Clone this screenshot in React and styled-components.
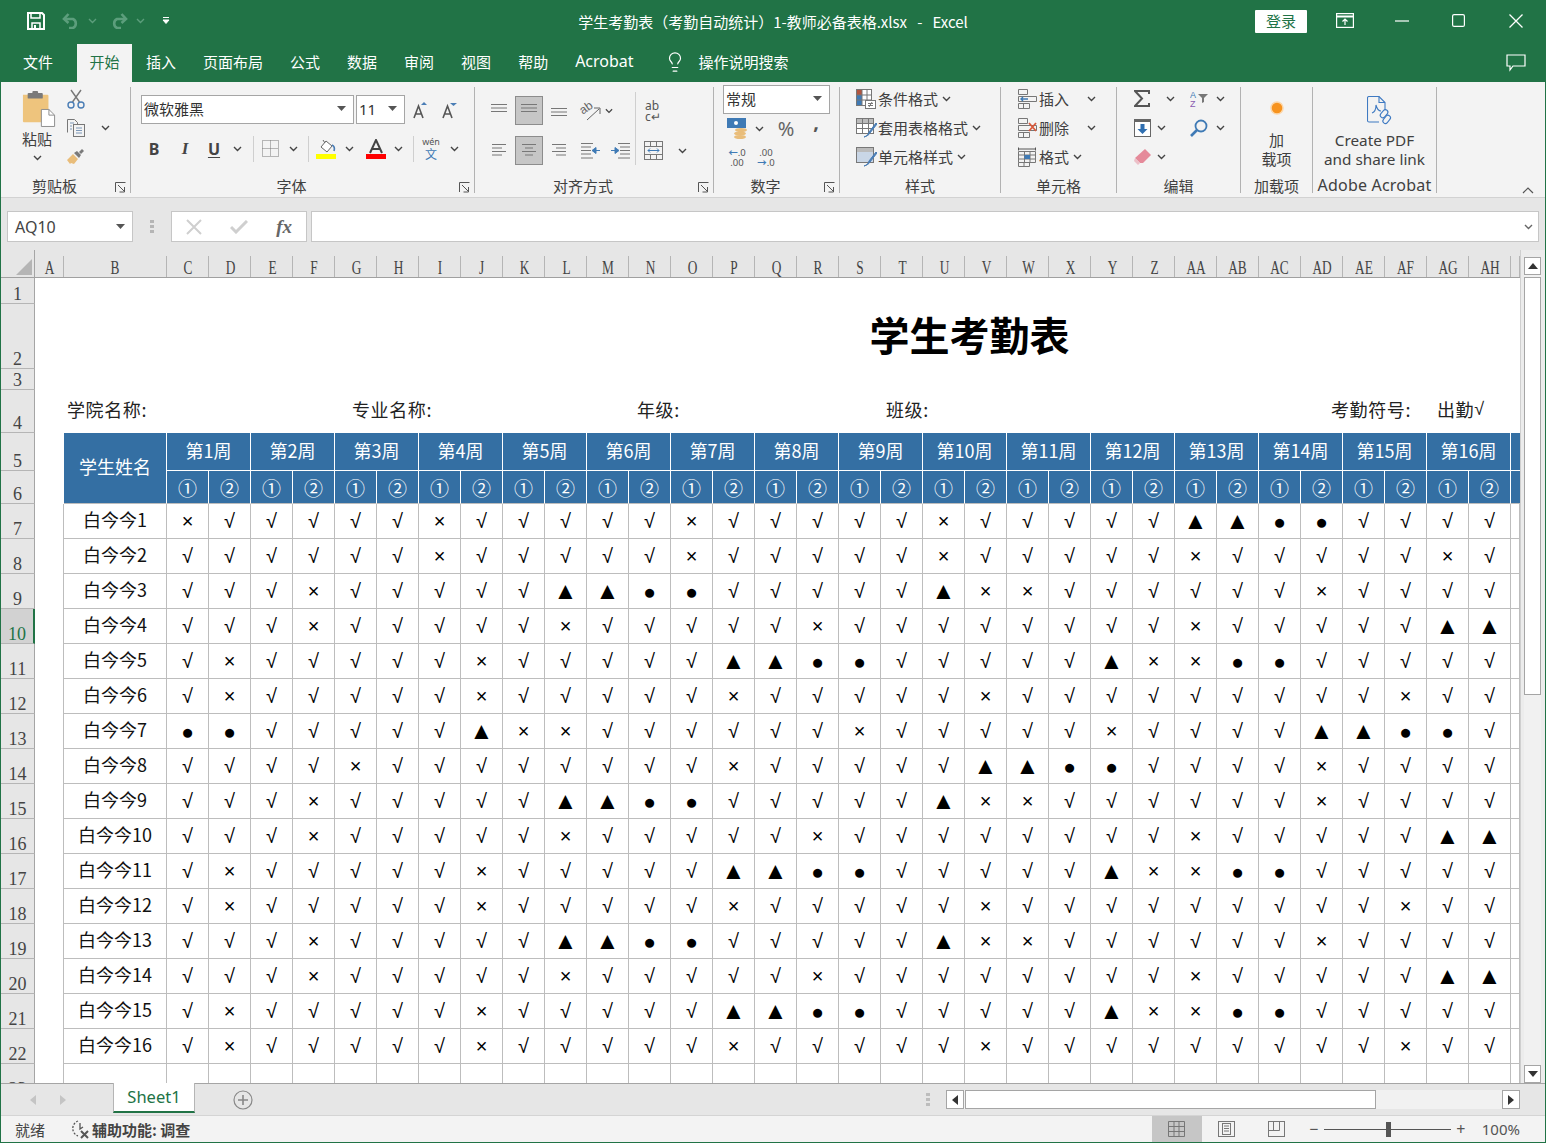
import styled, { createGlobalStyle } from 'styled-components'
import { Lightbulb } from 'lucide-react'

const CJK = `"Noto Sans CJK SC", "Noto Sans", sans-serif`
const LATIN = `"Noto Sans", "Noto Sans CJK SC", sans-serif`
const GREEN = '#217346'
const BLUE = '#346fa3'
const GRID = '#bdbdbd'

const GlobalStyle = createGlobalStyle`
    * { box-sizing : border-box; }
    html, body { margin : 0; padding : 0; background : #e6e6e6; }
    body { font-family : ${CJK}; color : #404040; }
`

const Window = styled.div`
    width : 1546px;
    height : 1143px;
    overflow : hidden;
    display : flex;
    flex-direction : column;
    border-left : 1px solid ${GREEN};
    border-right : 1px solid ${GREEN};
    border-bottom : 1px solid ${GREEN};
`

/* title bar */
const TitleBar = styled.div`
    height : 41px;
    flex : none;
    margin : 0 -1px;
    background : ${GREEN};
    display : grid;
    grid-template-columns : 1fr auto 1fr;
    align-items : center;
    color : #fff;
`
const QuickAccess = styled.div`
    display : flex;
    align-items : center;
    height : 100%;
    padding-left : 24px;
`
const DocTitle = styled.div`
    font-size : 15px;
    padding-top : 1px;
    white-space : pre;
    color : #fff;
`
const WindowControls = styled.div`
    display : flex;
    align-items : center;
    justify-content : flex-end;
    height : 100%;
    padding-right : 2px;
`
const LoginButton = styled.div`
    width : 52px;
    height : 23px;
    margin-top : 1px;
    margin-right : 9px;
    background : #fff;
    color : ${GREEN};
    font-size : 15px;
    line-height : 22px;
    text-align : center;
    border-radius : 1px;
`
const WinButton = styled.div`
    width : 57px;
    height : 100%;
    display : flex;
    align-items : center;
    justify-content : center;
`

/* ribbon tabs */
const TabBar = styled.div`
    height : 41px;
    flex : none;
    margin : 0 -1px;
    padding-left : 10px;
    padding-top : 3px;
    padding-right : 2px;
    background : ${GREEN};
    display : flex;
    gap : 1px;
`
const RibbonTab = styled.div`
    padding : 0 ${props => props.$active ? '12.5px' : '13px'};
    font-size : ${props => props.$latin ? 16 : 15}px;
    line-height : 35px;
    white-space : nowrap;
    color : ${props => props.$active ? GREEN : '#fff'};
    background : ${props => props.$active ? '#f3f3f3' : 'transparent'};
    margin-right : ${props => props.$file ? '10px' : '0'};
    font-family : ${props => props.$latin ? LATIN : CJK};
`
const SearchHint = styled.div`
    display : flex;
    align-items : center;
    gap : 13px;
    margin-left : 16px;
    font-size : 15px;
    color : #fff;
    height : 35px;
`
const CommentButton = styled.div`
    margin-left : auto;
    width : 57px;
    height : 38px;
    display : flex;
    align-items : center;
    justify-content : center;
`

/* ribbon */
const Ribbon = styled.div`
    height : 116px;
    flex : none;
    background : #f3f3f3;
    border-bottom : 1px solid #d2d2d2;
    display : flex;
`
const Group = styled.div`
    width : ${props => props.$w}px;
    flex : none;
    display : flex;
    flex-direction : column;
`
const GroupBody = styled.div`
    flex : 1;
    min-height : 0;
    display : flex;
    flex-direction : ${props => props.$col ? 'column' : 'row'};
    align-items : ${props => props.$center ? 'center' : 'stretch'};
    padding-top : ${props => props.$pt ?? 2}px;
    padding-left : ${props => props.$pl ?? 0}px;
`
const GroupFooter = styled.div`
    height : 23px;
    flex : none;
    display : flex;
    align-items : center;
    font-size : ${props => props.$latin ? 16 : 15}px;
    letter-spacing : ${props => props.$latin ? '0.2px' : '0'};
    line-height : 23px;
    white-space : nowrap;
    font-family : ${props => props.$latin ? LATIN : CJK};
`
const FooterLabel = styled.span`
    flex : 1;
    text-align : center;
`
const LauncherSlot = styled.div`
    width : 22px;
    flex : none;
    display : flex;
    justify-content : flex-end;
    padding-right : 4px;
    padding-top : 4px;
`
const GroupDivider = styled.div`
    width : 1px;
    flex : none;
    height : 106px;
    margin-top : 5px;
    background : #b2b2b2;
`
const ToolRow = styled.div`
    display : flex;
    align-items : center;
    height : ${props => props.$h ?? 29}px;
    margin-top : ${props => props.$mt ?? 0}px;
    flex : none;
`
const Tool = styled.div`
    width : ${props => props.$w}px;
    height : 100%;
    flex : none;
    margin-left : ${props => props.$ml ?? 0}px;
    display : flex;
    align-items : center;
    justify-content : center;
    font-size : ${props => props.$fs ?? 15}px;
`
const ActiveTool = styled(Tool)`
    margin : 0 2px;
    background : #c6c6c6;
    border : 1px solid #8c8c8c;
`
const ToolDivider = styled.div`
    width : 1px;
    height : 26px;
    flex : none;
    background : #cfcfcf;
    margin-left : ${props => props.$ml ?? 0}px;
    margin-right : ${props => props.$mr ?? 0}px;
`
const TallDivider = styled.div`
    width : 1px;
    height : 73px;
    flex : none;
    background : #cfcfcf;
`
const ComboBox = styled.div`
    width : ${props => props.$w}px;
    height : 29px;
    flex : none;
    margin-left : ${props => props.$ml ?? 0}px;
    background : #fff;
    border : 1px solid #a5a5a5;
    display : flex;
    align-items : center;
    justify-content : space-between;
    padding : 0 7px 2px ${props => props.$pl ?? 2}px;
    font-size : 15px;
    color : #333;
    font-family : ${props => props.$latin ? LATIN : CJK};
`
const ClipboardLeft = styled.div`
    width : 54px;
    margin-left : 9px;
    display : flex;
    flex-direction : column;
    align-items : center;
    padding-top : 7px;
    font-size : 15px;
    line-height : 20px;
`
const PasteLabel = styled.div`
    margin-top : 1px;
    margin-bottom : 5px;
    line-height : 22px;
`
const BigLabel = styled.div`
    font-size : ${props => props.$latin ? 15.3 : 15}px;
    line-height : 19px;
    text-align : center;
    white-space : nowrap;
    margin-top : ${props => props.$mt ?? 0}px;
    font-family : ${props => props.$latin ? LATIN : CJK};
`
const IconNudge = styled.span`
    display : flex;
    margin-left : ${props => props.$x}px;
`
const RibbonRest = styled.div`
    flex : 1;
    display : flex;
    justify-content : flex-end;
    align-items : flex-end;
    padding : 0 11px 3px 0;
`
const StyleLabel = styled.span`
    font-size : 15px;
    white-space : nowrap;
    margin-right : ${props => props.$mr ?? 4}px;
`
const RowsColumn = styled.div`
    display : flex;
    flex-direction : column;
`

/* formula bar */
const FormulaBand = styled.div`
    height : 52px;
    flex : none;
    background : #e6e6e6;
    display : flex;
    align-items : flex-start;
    padding-top : 13px;
    padding-left : 6px;
    padding-right : 6px;
`
const NameBox = styled.div`
    width : 126px;
    height : 31px;
    background : #fff;
    border : 1px solid #c6c6c6;
    display : flex;
    align-items : center;
    justify-content : space-between;
    padding : 0 7px;
    font-family : ${LATIN};
    font-size : 16px;
    color : #444;
`
const BarGrip = styled.div`
    width : 38px;
    height : 31px;
    display : flex;
    align-items : center;
    justify-content : center;
`
const FxBox = styled.div`
    width : 136px;
    height : 31px;
    background : #fff;
    border : 1px solid #c6c6c6;
    display : flex;
    align-items : center;
    justify-content : space-between;
    padding : 0 14px 0 14px;
`
const FxText = styled.span`
    font-family : "Liberation Serif", serif;
    font-style : italic;
    font-size : 19px;
    font-weight : 700;
    color : #666;
`
const FormulaInput = styled.div`
    flex : 1;
    height : 31px;
    margin-left : 4px;
    background : #fff;
    border : 1px solid #c6c6c6;
    display : flex;
    align-items : center;
    justify-content : flex-end;
    padding-right : 5px;
`

/* sheet */
const SheetArea = styled.div`
    flex : 1;
    min-height : 0;
    display : flex;
    overflow : hidden;
`
const SheetGrid = styled.div`
    width : 1519px;
    flex : none;
    display : grid;
    grid-template-columns : 34px 29px 103px repeat(32, 42px) 9px;
    grid-template-rows : 28px 26px 65px 21px 43px 38px 33px repeat(17, 35px);
    background : #fff;
    overflow : hidden;
    font-family : ${CJK};
    color : #111;
`
const Corner = styled.div`
    background : #e6e6e6;
    border-right : 1px solid #a5a5a5;
    border-bottom : 1px solid #a0a0a0;
    display : flex;
    align-items : flex-end;
    justify-content : flex-end;
    padding : 0 2px 2px 0;
`
const ColHead = styled.div`
    background : linear-gradient(#b5b5b5, #b5b5b5) no-repeat right bottom / 1px 21px #e6e6e6;
    border-bottom : 1px solid #a0a0a0;
    display : flex;
    align-items : flex-end;
    justify-content : center;
    overflow : hidden;
`
const ColLetter = styled.span`
    display : block;
    font-family : "Liberation Serif", serif;
    font-size : 18px;
    line-height : 18px;
    color : #444;
    transform : scaleX(0.74);
    white-space : nowrap;
`
const RowHead = styled.div`
    grid-column : 1;
    background : ${props => props.$selected ? '#d2d2d2' : '#e6e6e6'};
    border-right : ${props => props.$selected ? `2px solid ${GREEN}` : '1px solid #a5a5a5'};
    border-bottom : 1px solid #b5b5b5;
    display : flex;
    align-items : flex-end;
    justify-content : center;
    font-family : "Liberation Serif", serif;
    font-size : 18px;
    line-height : 18px;
    overflow : hidden;
    color : ${props => props.$selected ? GREEN : '#444'};
`
const Blank = styled.div`
    grid-column : span ${props => props.$span ?? 1};
    border-right : ${props => props.$lined ? `1px solid ${GRID}` : 'none'};
`
const SheetTitle = styled.div`
    grid-column : span 27;
    display : flex;
    align-items : center;
    justify-content : center;
    font-size : 40px;
    line-height : 48px;
    padding-bottom : 6px;
    font-weight : 700;
    color : #000;
`
const InfoLabel = styled.div`
    grid-column : ${props => props.$col} / span ${props => props.$span};
    padding-left : ${props => props.$pl}px;
    padding-bottom : 5px;
    display : flex;
    align-items : center;
    font-size : 18px;
    letter-spacing : 0.6px;
    white-space : nowrap;
    color : #222;
`
const CheckGlyph = styled.span`
    font-family : "Liberation Sans", sans-serif;
    font-size : 18px;
`
const HeadName = styled.div`
    grid-row : span 2;
    background : ${BLUE};
    color : #fff;
    border-right : 1px solid #fff;
    border-bottom : 1px solid ${GRID};
    display : flex;
    align-items : center;
    justify-content : center;
    font-size : 18px;
    padding-bottom : 4px;
`
const WeekCell = styled.div`
    grid-column : span ${props => props.$span ?? 2};
    background : ${BLUE};
    color : #fff;
    border-right : ${props => props.$tail ? 'none' : '1px solid #fff'};
    border-bottom : 1px solid #fff;
    display : flex;
    align-items : center;
    justify-content : center;
    font-size : 18px;
    padding-bottom : 4px;
`
const TurnCell = styled.div`
    background : ${BLUE};
    color : #fff;
    border-right : ${props => props.$tail ? 'none' : '1px solid #fff'};
    border-bottom : 1px solid ${GRID};
    display : flex;
    align-items : center;
    justify-content : center;
    font-size : 19px;
    padding-top : 1px;
`
const NameCell = styled.div`
    border-right : 1px solid ${GRID};
    border-bottom : 1px solid ${GRID};
    display : flex;
    align-items : center;
    justify-content : center;
    font-size : 18px;
    padding-bottom : 4px;
    white-space : nowrap;
    color : #111;
`
const MarkCell = styled.div`
    border-right : 1px solid ${GRID};
    border-bottom : 1px solid ${GRID};
    display : flex;
    align-items : center;
    justify-content : center;
    font-family : "Liberation Sans", sans-serif;
    font-size : ${props => props.$fs}px;
    line-height : 1;
    color : #000;
`

/* right gutter with the vertical scroll bar */
const Gutter = styled.div`
    flex : 1;
    background : #ececec;
    border-left : 1px solid #cfcfcf;
    padding : 7px 4px 0 3px;
    display : flex;
    flex-direction : column;
`
const ScrollButton = styled.div`
    height : 18px;
    flex : none;
    background : #fff;
    border : 1px solid #a5a5a5;
    display : flex;
    align-items : center;
    justify-content : center;
`
const VerticalTrack = styled.div`
    flex : 1;
    padding-top : 2px;
    background : #f1f1f1;
`
const VerticalThumb = styled.div`
    height : 418px;
    background : #fff;
    border : 1px solid #a5a5a5;
`

/* sheet tabs */
const TabStrip = styled.div`
    height : 32px;
    flex : none;
    background : #e6e6e6;
    border-top : 1px solid #a5a5a5;
    display : flex;
    align-items : flex-start;
`
const TabArrows = styled.div`
    width : 112px;
    height : 31px;
    display : flex;
    align-items : center;
    gap : 24px;
    padding-left : 29px;
`
const SheetTab = styled.div`
    width : 82px;
    height : 30px;
    margin-top : -1px;
    background : #fff;
    border-left : 1px solid #b5b5b5;
    border-right : 1px solid #b5b5b5;
    border-bottom : 2px solid ${GREEN};
    color : ${GREEN};
    font-family : ${LATIN};
    font-size : 16.5px;
    line-height : 27px;
    text-align : center;
`
const AddSheet = styled.div`
    width : 96px;
    height : 31px;
    display : flex;
    align-items : center;
    padding-left : 38px;
`
const SplitGrip = styled.div`
    margin-left : auto;
    width : 36px;
    height : 31px;
    display : flex;
    align-items : center;
    justify-content : center;
`
const HorizontalBar = styled.div`
    width : 574px;
    height : 19px;
    margin-top : 6px;
    margin-right : 25px;
    display : flex;
    background : #f1f1f1;
`
const HScrollButton = styled.div`
    width : 18px;
    flex : none;
    background : #fff;
    border : 1px solid #a5a5a5;
    display : flex;
    align-items : center;
    justify-content : center;
`
const HorizontalThumb = styled.div`
    width : 411px;
    margin-left : 1px;
    background : #fff;
    border : 1px solid #a5a5a5;
`
const HorizontalFill = styled.div`
    flex : 1;
`

/* status bar */
const StatusBar = styled.div`
    height : 27px;
    flex : none;
    background : #f3f3f3;
    border-top : 1px solid #d4d4d4;
    display : flex;
    align-items : center;
    font-size : 15px;
    color : #444;
`
const StatusText = styled.span`
    margin-left : 14px;
    width : 38px;
`
const AccessText = styled.span`
    display : flex;
    align-items : center;
    gap : 3px;
    font-weight : 700;
    font-size : 15px;
    color : #444;
`
const ViewSwitch = styled.div`
    margin-left : auto;
    display : flex;
    align-items : center;
    height : 100%;
`
const ViewButton = styled.div`
    width : 50px;
    height : 100%;
    display : flex;
    align-items : center;
    justify-content : center;
    background : ${props => props.$active ? '#c6c6c6' : 'transparent'};
`
const ZoomArea = styled.div`
    display : flex;
    align-items : center;
    margin-left : 2px;
    font-size : 15px;
    color : #555;
`
const ZoomSign = styled.span`
    font-family : ${LATIN};
    font-size : 16px;
    width : 20px;
    text-align : center;
    line-height : 1;
`
const ZoomSlider = styled.div`
    width : 127px;
    height : 1px;
    background : #555;
    display : flex;
    align-items : center;
    padding-left : 62px;
`
const ZoomThumb = styled.div`
    width : 5px;
    height : 15px;
    background : #555;
    flex : none;
`
const ZoomValue = styled.span`
    margin-left : 11px;
    margin-right : 25px;
    font-family : ${LATIN};
    font-size : 15px;
`

/* icons */
const Chev = ({ color = '#444' }) => (
    <svg width="9" height="6" viewBox="0 0 9 6"><path d="M1 1l3.5 3.5L8 1" fill="none" stroke={color} strokeWidth="1.4" /></svg>
)
const Caret = ({ color = '#555' }) => (
    <svg width="9" height="5" viewBox="0 0 9 5"><path d="M0 0h9L4.5 5z" fill={color} /></svg>
)
const Launcher = () => (
    <svg width="11" height="11" viewBox="0 0 11 11" fill="none" stroke="#555" strokeWidth="1">
        <path d="M.5 10V.5h10" /><path d="M3 3l6 6M9.500 5v5h-5" />
    </svg>
)
const SaveIcon = () => (
    <svg width="18" height="18" viewBox="0 0 18 18" fill="none" stroke="#fff" strokeWidth="2">
        <path d="M1 1h14l2 2v14H1z" /><path d="M4 1v5h9V1" strokeWidth="1.5" /><path d="M5 17v-6h8v6" strokeWidth="1.5" /><path d="M8 13v4" />
    </svg>
)
const UndoIcon = ({ flip }) => (
    <svg width="18" height="16" viewBox="0 0 18 16" fill="none" stroke="#5c9e7c" strokeWidth="2.6" style={flip ? { transform: 'scaleX(-1)' } : undefined}>
        <path d="M2 6h9a5 5 0 0 1 0 9H7" /><path d="M6.500 1L2 6l4.500 4" />
    </svg>
)
const CustomizeIcon = () => (
    <svg width="8" height="8" viewBox="0 0 8 8"><path d="M1 .5h6M1 3h6l-3 3.500z" stroke="#fff" fill="#fff" strokeWidth="1" /></svg>
)
const DisplayIcon = () => (
    <svg width="18" height="15" viewBox="0 0 18 15" fill="none" stroke="#fff" strokeWidth="1.2">
        <rect x=".6" y=".6" width="16.8" height="13.8" /><path d="M.6 3.500h16.800" strokeWidth="2" /><path d="M9 12V6M6.500 8.500L9 6l2.500 2.500" />
    </svg>
)
const MinIcon = () => <svg width="14" height="2" viewBox="0 0 14 2"><path d="M0 1h14" stroke="#fff" strokeWidth="1.2" /></svg>
const MaxIcon = () => <svg width="13" height="13" viewBox="0 0 13 13"><rect x=".6" y=".6" width="11.8" height="11.8" rx="1.5" fill="none" stroke="#fff" strokeWidth="1.2" /></svg>
const CloseIcon = () => <svg width="14" height="14" viewBox="0 0 14 14"><path d="M.5.500l13 13M13.500.5l-13 13" stroke="#fff" strokeWidth="1.3" /></svg>
const CommentIcon = () => (
    <svg width="20" height="18" viewBox="0 0 20 18" fill="none" stroke="#fff" strokeWidth="1.2"><path d="M1 1h18v11H7l-3 4v-4H1z" /></svg>
)
const PasteIcon = () => (
    <svg width="34" height="36" viewBox="0 0 36 38">
        <path d="M1 4h26a1 1 0 0 1 1 1v28H2a1 1 0 0 1-1-1z" fill="#eec47d" />
        <rect x="6" y="2" width="16" height="6" rx="1" fill="#7a7a7a" />
        <rect x="11" y="0" width="6" height="4" rx="1" fill="#7a7a7a" />
        <path d="M20.500 19.500h8l6 6v12h-14z" fill="#fff" stroke="#8a8a8a" />
        <path d="M28.500 19.500v6h6" fill="none" stroke="#8a8a8a" />
    </svg>
)
const CutIcon = () => (
    <svg width="18" height="20" viewBox="0 0 18 20" fill="none">
        <path d="M4 1l8.500 12M14 1L5.500 13" stroke="#777" strokeWidth="1.4" />
        <circle cx="4" cy="16" r="3" stroke="#4a7db5" strokeWidth="1.4" /><circle cx="14" cy="16" r="3" stroke="#4a7db5" strokeWidth="1.4" />
    </svg>
)
const CopyIcon = () => (
    <svg width="18" height="18" viewBox="0 0 18 18" fill="none" stroke="#777">
        <path d="M.5 13.500V.5h7l3 3v2" /><rect x="6.500" y="5.500" width="11" height="12" fill="#f3f3f3" />
        <path d="M3 4h4M3 7h2M3 10h2M9 9h6M9 11.500h6M9 14h6" stroke="#7d98b8" />
    </svg>
)
const PainterIcon = () => (
    <svg width="18" height="16" viewBox="0 0 18 16">
        <path d="M0 11l6-6 5 5-4 5-3-1-1 1z" fill="#e9bd7a" /><path d="M7 4l3-2 4 4-2 3z" fill="#7a7a7a" /><path d="M12 3l3-3 2 2-3 3z" fill="#7a7a7a" />
    </svg>
)
const GrowFont = ({ down }) => (
    <svg width="16" height="18" viewBox="0 0 16 18">
        <path d="M1 17L5.500 5 10 17M3 13h5" fill="none" stroke="#555" strokeWidth="1.6" />
        <path d={down ? 'M8 2h7l-3.500 3z' : 'M8 4h6l-3-3z'} fill="#4a7db5" />
    </svg>
)
const BoldMark = styled.span`
    font-family : ${LATIN};
    font-weight : 700;
    font-size : 16px;
    color : #444;
`
const ItalicMark = styled(BoldMark)`
    font-style : italic;
    font-family : "Liberation Serif", serif;
    font-size : 17px;
`
const UnderMark = styled(BoldMark)`
    text-decoration : underline;
    text-underline-offset : 2px;
`
const BorderIcon = () => (
    <svg width="17" height="17" viewBox="0 0 17 17" fill="none" stroke="#777" strokeDasharray="1 1"><path d="M.5.500h16v16H.5zM8.500.5v16M.5 8.500h16" /></svg>
)
const FillIcon = () => (
    <svg width="21" height="20" viewBox="0 0 21 20">
        <path d="M5 8l5-6 6 5-5 6z" fill="#fff" stroke="#666" /><path d="M7 1l2 3" stroke="#666" />
        <path d="M16 6c2 1 3 3 2 6" fill="none" stroke="#4a7db5" strokeWidth="1.6" />
        <rect x="0" y="15" width="20" height="5" fill="#ffff00" />
    </svg>
)
const FontColorIcon = () => (
    <svg width="20" height="20" viewBox="0 0 20 20">
        <path d="M4 14L10 1l6 13M6 10h8" fill="none" stroke="#444" strokeWidth="2" /><rect y="15" width="20" height="5" fill="#ff0000" />
    </svg>
)
const PhoneticText = styled.span`
    display : flex;
    flex-direction : column;
    align-items : center;
`
const PhoneticTop = styled.span`
    font-family : ${LATIN};
    font-size : 9px;
    line-height : 10px;
    color : #555;
`
const PhoneticBottom = styled.span`
    font-size : 12px;
    line-height : 13px;
    color : #3f7ab5;
`
const LinesIcon = ({ lines, y = 0, h = 14 }) => (
    <svg width="18" height={h} viewBox={`0 0 18 ${h}`} fill="none" stroke="#777" strokeWidth="1">
        {lines.map((l, i) => <path key={i} d={`M${l[0]} ${y + i * 3.5 + 0.5}H${l[1]}`} />)}
    </svg>
)
const OrientIcon = () => (
    <svg width="24" height="24" viewBox="0 0 24 24">
        <g transform="rotate(-35 10 11)"><text x="3" y="12" fontFamily="Liberation Sans" fontSize="12" fill="#666">ab</text></g>
        <path d="M9 21L21 10M16 9h6v6" fill="none" stroke="#666" />
    </svg>
)
const WrapIcon = styled.span`
    font-family : ${LATIN};
    font-size : 12px;
    line-height : 11px;
    color : #555;
    text-align : left;
    white-space : pre;
`
const IndentIcon = ({ flip }) => (
    <svg width="19" height="16" viewBox="0 0 19 16" style={flip ? { transform: 'scaleX(-1)' } : undefined}>
        <path d="M7 .5h12M9 4h10M9 7.500h10M9 11h10M7 15h12" stroke="#777" fill="none" />
        <path d="M0 7.500h4v-3l4 3-4 3v-3z" stroke="#3f7ab5" fill="#3f7ab5" />
    </svg>
)
const MergeIcon = () => (
    <svg width="19" height="19" viewBox="0 0 19 19" fill="none" stroke="#777">
        <rect x=".5" y=".5" width="18" height="18" /><path d="M.5 5.500h18M.5 13.500h18M6.500.5v5M12.500.5v5M6.500 13.500v5M12.500 13.500v5" />
        <path d="M4 9.500h11M6 7.500L4 9.500l2 2M13 7.500l2 2-2 2" stroke="#3f7ab5" />
    </svg>
)
const MoneyIcon = () => (
    <svg width="20" height="21" viewBox="0 0 20 21">
        <rect x="0" y="0" width="19" height="10" fill="#3f7ab5" /><circle cx="9" cy="5" r="2" fill="#fff" />
        <ellipse cx="14" cy="12" rx="6" ry="2" fill="#e9bd7a" /><ellipse cx="13" cy="15.500" rx="6" ry="2" fill="#e9bd7a" /><ellipse cx="13" cy="19" rx="6" ry="2" fill="#e9bd7a" />
    </svg>
)
const PercentText = styled.span`
    font-family : ${LATIN};
    font-size : 20px;
    color : #666;
`
const CommaText = styled.span`
    font-family : ${LATIN};
    font-weight : 700;
    font-size : 20px;
    line-height : 20px;
    padding-bottom : 14px;
    color : #555;
`
const DecimalWrap = styled.span`
    display : flex;
    flex-direction : column;
    align-items : center;
    font-family : ${LATIN};
    font-size : 9.5px;
    line-height : 10px;
    color : #555;
    white-space : pre;
`
const DecimalArrow = styled.span`
    color : #3f7ab5;
    font-weight : 700;
`
const CondFormatIcon = () => (
    <svg width="20" height="20" viewBox="0 0 20 20" fill="none" stroke="#777">
        <rect x=".5" y=".5" width="15" height="16" fill="#fff" /><rect x="1" y="1" width="5" height="5" fill="#b2553f" stroke="none" /><rect x="1" y="6" width="5" height="5" fill="#3f7ab5" stroke="none" /><rect x="1" y="11" width="5" height="5" fill="#3f7ab5" stroke="none" />
        <path d="M6 .5v16M.5 6h15M.5 11h15M11 .5v16" /><rect x="9.500" y="11.500" width="10" height="8" fill="#fff" />
        <path d="M12 14.500h5M12 16.500h5M16 13l-3 5" />
    </svg>
)
const TableBrushIcon = ({ fill }) => (
    <svg width="21" height="20" viewBox="0 0 21 20" fill="none" stroke="#777">
        <rect x=".5" y=".5" width="17" height="15" fill="#fff" /><rect x="1" y="1" width="16" height="4" fill="#bbb" stroke="none" />
        {fill ? <rect x="1" y="5" width="16" height="10" fill="#c9d6e6" stroke="none" /> : <path d="M.5 5.500h17M.5 10.500h17M6.500.5v15M12.500.5v15" />}
        <path d="M8 19c3-1 4-2 5-5l7-9 1 1-7 9c-1 2-3 3-6 4z" fill="#4a7db5" stroke="#4a7db5" />
    </svg>
)
const CellIcon = ({ kind }) => (
    <svg width="19" height="20" viewBox="0 0 19 20" fill="none" stroke="#777">
        {kind !== 'format' && <path d="M.5.500h9v5h-9zM.5 14.500h11v5H.5zM5.500 14.500v5M.5 7.500h18v5H.5z" />}
        {kind === 'insert' && <path d="M10 10H3M5 8L3 10l2 2" stroke="#3f7ab5" strokeWidth="1.4" />}
        {kind === 'delete' && <path d="M11 5l7 8M18 5l-7 8" stroke="#d9593b" strokeWidth="1.8" />}
        {kind === 'format' && (
            <>
                <path d="M.5 4.500h17v11H.5zM6.500 4.500v11M12 4.500v11M.5 8h17M.5 12h17M.5 15.500v4h11v-4M6 15.500v4" />
                <path d="M.5.500v3M17.500.5v3M1 2h16" stroke="#555" />
                <rect x="6.500" y="8" width="5.500" height="4" fill="#3f7ab5" stroke="none" />
            </>
        )}
    </svg>
)
const SumIcon = () => (
    <svg width="16" height="17" viewBox="0 0 16 17"><path d="M15 4V1H1l7 7.500L1 16h14v-3" fill="none" stroke="#555" strokeWidth="2" /></svg>
)
const SortIcon = () => (
    <svg width="19" height="18" viewBox="0 0 19 18" fill="none">
        <text x="0" y="8" fontFamily="Liberation Sans" fontSize="9" fill="#3f7ab5">A</text>
        <text x="0" y="17" fontFamily="Liberation Sans" fontSize="9" fill="#8a5ab0">Z</text>
        <path d="M8 4h10l-4 4v4l-2 1V8z" fill="#777" />
    </svg>
)
const FillDownIcon = () => (
    <svg width="17" height="18" viewBox="0 0 17 18">
        <rect x=".5" y=".5" width="16" height="17" fill="#fff" stroke="#666" /><rect width="17" height="3" fill="#666" />
        <path d="M6.500 5h4v5h3L8.500 15 3.500 10h3z" fill="#2f6fb1" />
    </svg>
)
const FindIcon = () => (
    <svg width="18" height="18" viewBox="0 0 18 18" fill="none" stroke="#3f7ab5">
        <circle cx="11" cy="7" r="5.500" strokeWidth="1.8" /><path d="M7 11l-6 6" strokeWidth="2.6" />
    </svg>
)
const EraserIcon = () => (
    <svg width="17" height="16" viewBox="0 0 17 16">
        <path d="M11 0l6 6-8 8H6L1 9z" fill="#e58a9a" /><path d="M1 9l5 5-2 2-4-4z" fill="#ecc0c8" />
    </svg>
)
const AddinDot = () => (
    <svg width="16" height="16" viewBox="0 0 16 16"><circle cx="8" cy="8" r="6" fill="#f7931e" stroke="#fcd6a8" strokeWidth="1.500" /></svg>
)
const PdfIcon = () => (
    <svg width="26" height="30" viewBox="0 0 26 30" fill="none" stroke="#3f7ac2" strokeWidth="1.1">
        <path d="M12 26H2a1.500 1.500 0 0 1-1.500-1.500V2A1.500 1.500 0 0 1 2 .5h10l6 6v8" /><path d="M12 .5v6h6" />
        <path d="M5 17c3-1 4-4 4-8 1 4 3 6 5 6" />
        <rect x="15" y="13" width="5" height="9" rx="2.500" transform="rotate(40 17 17)" /><rect x="17.500" y="19" width="5" height="9" rx="2.500" transform="rotate(40 20 23)" />
    </svg>
)
const CrossGray = () => <svg width="16" height="16" viewBox="0 0 16 16"><path d="M1 1l14 14M15 1L1 15" stroke="#cfcfcf" strokeWidth="2" /></svg>
const CheckGray = () => <svg width="18" height="14" viewBox="0 0 18 14"><path d="M1 7l5 5L17 1" fill="none" stroke="#cfcfcf" strokeWidth="3" /></svg>
const GripDots = ({ color = '#b5b5b5' }) => (
    <svg width="4" height="14" viewBox="0 0 4 14" fill={color}><rect width="4" height="3" /><rect y="5" width="4" height="3" /><rect y="10" width="4" height="3" /></svg>
)
const SelectAll = () => <svg width="16" height="16" viewBox="0 0 16 16"><path d="M16 0v16H0z" fill="#b5b5b5" /></svg>
const Tri = ({ dir, color = '#333' }) => {
    const d = { up: 'M0 6L5 0l5 6z', down: 'M0 0h10L5 6z', left: 'M6 0v10L0 5z', right: 'M0 0v10l6-5z' }[dir]
    const wide = dir === 'up' || dir === 'down'
    return <svg width={wide ? 10 : 6} height={wide ? 6 : 10} viewBox={wide ? '0 0 10 6' : '0 0 6 10'}><path d={d} fill={color} /></svg>
}
const PlusCircle = () => (
    <svg width="20" height="20" viewBox="0 0 20 20" fill="none" stroke="#888" strokeWidth="1.200"><circle cx="10" cy="10" r="9" /><path d="M5 10h10M10 5v10" strokeWidth="1.600" /></svg>
)
const AccessIcon = () => (
    <svg width="20" height="20" viewBox="0 0 20 20" fill="none" stroke="#555" strokeWidth="1.300">
        <path d="M8 2a8 8 0 0 0 0 15" strokeDasharray="2 1.500" /><path d="M10 4v6l3-2" /><path d="M11 12l7 7M18 12l-7 7" strokeWidth="2" />
    </svg>
)
const NormalViewIcon = () => (
    <svg width="17" height="16" viewBox="0 0 17 16" fill="none" stroke="#777"><path d="M.5.500h16v15H.5zM.5 5.500h16M.5 10.500h16M6 .5v15M11 .5v15" /></svg>
)
const PageViewIcon = () => (
    <svg width="17" height="16" viewBox="0 0 17 16" fill="none" stroke="#777"><rect x=".5" y=".5" width="16" height="15" /><rect x="4.500" y="2.500" width="8" height="11" /><path d="M6 5h5M6 7.500h5M6 10h5" /></svg>
)
const BreakViewIcon = () => (
    <svg width="17" height="16" viewBox="0 0 17 16" fill="none" stroke="#777"><rect x=".5" y=".5" width="16" height="15" /><path d="M5.500.5v9M11.500.5v9M.5 9.500h11" /></svg>
)
const Collapse = () => <svg width="12" height="7" viewBox="0 0 12 7"><path d="M1 6l5-5 5 5" fill="none" stroke="#555" strokeWidth="1.200" /></svg>

/* sheet data */
const letters = ['A', 'B', 'C', 'D', 'E', 'F', 'G', 'H', 'I', 'J', 'K', 'L', 'M', 'N', 'O', 'P', 'Q', 'R', 'S', 'T', 'U', 'V', 'W', 'X', 'Y', 'Z', 'AA', 'AB', 'AC', 'AD', 'AE', 'AF', 'AG', 'AH', '']
const r9 = 'vvvxvvvvvttoovvvvvtxxvvvvvvxvvvv'
const r10 = 'vvvxvvvvvxvvvvvxvvvvvvvvxvvvvvtt'
const r11 = 'vxvvvvvxvvvvvttoovvvvvtxxoovvvvv'
const r12 = 'vxvvvvvxvvvvvxvvvvvxvvvvvvvvvxvv'
const students = [
    'xvvvvvxvvvvvxvvvvvxvvvvvttoovvvv',
    'vvvvvvxvvvvvxvvvvvxvvvvvxvvvvvxv',
    r9, r10, r11, r12,
    'oovvvvvtxxvvvvvvxvvvvvxvvvvttoov',
    'vvvvxvvvvvvvvxvvvvvttoovvvvxvvvv',
    r9, r10, r11, r12, r9, r10, r11, r12,
]
const MARKS = {
    v: { glyph: '√', size: 20 },
    x: { glyph: '×', size: 20 },
    t: { glyph: '▲', size: 24 },
    o: { glyph: '●', size: 21 },
}
const weeks = Array.from({ length: 16 }, (_, i) => `第${i + 1}周`)
const tabs = ['插入', '页面布局', '公式', '数据', '审阅', '视图', '帮助']

const App = () => {
    return (
        <Window>
            <GlobalStyle />
            <TitleBar>
                <QuickAccess>
                    <Tool $w={24}><SaveIcon /></Tool>
                    <Tool $w={22} $ml={12}><UndoIcon /></Tool>
                    <Tool $w={20}><Chev color="#5c9e7c" /></Tool>
                    <Tool $w={18} $ml={8}><UndoIcon flip /></Tool>
                    <Tool $w={24}><Chev color="#5c9e7c" /></Tool>
                    <Tool $w={28}><CustomizeIcon /></Tool>
                </QuickAccess>
                <DocTitle>学生考勤表（考勤自动统计）1-教师必备表格.xlsx   -   Excel</DocTitle>
                <WindowControls>
                    <LoginButton>登录</LoginButton>
                    <WinButton><DisplayIcon /></WinButton>
                    <WinButton><MinIcon /></WinButton>
                    <WinButton><MaxIcon /></WinButton>
                    <WinButton><CloseIcon /></WinButton>
                </WindowControls>
            </TitleBar>

            <TabBar>
                <RibbonTab $file>文件</RibbonTab>
                <RibbonTab $active>开始</RibbonTab>
                {tabs.map(t => <RibbonTab key={t}>{t}</RibbonTab>)}
                <RibbonTab $latin>Acrobat</RibbonTab>
                <SearchHint>
                    <Lightbulb size={22} color="#fff" strokeWidth={1.3} />
                    操作说明搜索
                </SearchHint>
                <CommentButton><CommentIcon /></CommentButton>
            </TabBar>

            <Ribbon>
                <Group $w={129}>
                    <GroupBody>
                        <ClipboardLeft>
                            <IconNudge $x={4}><PasteIcon /></IconNudge>
                            <PasteLabel>粘贴</PasteLabel>
                            <Chev />
                        </ClipboardLeft>
                        <RowsColumn>
                            <ToolRow><Tool $w={24}><CutIcon /></Tool></ToolRow>
                            <ToolRow><Tool $w={24}><CopyIcon /></Tool><Tool $w={34}><Chev /></Tool></ToolRow>
                            <ToolRow><Tool $w={24}><PainterIcon /></Tool></ToolRow>
                        </RowsColumn>
                    </GroupBody>
                    <GroupFooter>
                        <FooterLabel>剪贴板</FooterLabel>
                        <LauncherSlot><Launcher /></LauncherSlot>
                    </GroupFooter>
                </Group>
                <GroupDivider />

                <Group $w={343}>
                    <GroupBody $col $pt={13} $pl={10}>
                        <ToolRow>
                            <ComboBox $w={213}>微软雅黑<Caret /></ComboBox>
                            <ComboBox $w={49} $ml={2} $latin>11<Caret /></ComboBox>
                            <Tool $w={28} $ml={2}><GrowFont /></Tool>
                            <Tool $w={30}><GrowFont down /></Tool>
                        </ToolRow>
                        <ToolRow $mt={10}>
                            <Tool $w={26}><BoldMark>B</BoldMark></Tool>
                            <Tool $w={36}><ItalicMark>I</ItalicMark></Tool>
                            <Tool $w={22}><UnderMark>U</UnderMark></Tool>
                            <Tool $w={24}><Chev /></Tool>
                            <ToolDivider $ml={4} $mr={3} />
                            <Tool $w={27}><BorderIcon /></Tool>
                            <Tool $w={18}><Chev /></Tool>
                            <ToolDivider $ml={6} $mr={5} />
                            <Tool $w={24}><FillIcon /></Tool>
                            <Tool $w={22}><Chev /></Tool>
                            <Tool $w={32}><FontColorIcon /></Tool>
                            <Tool $w={12}><Chev /></Tool>
                            <ToolDivider $ml={9} $mr={8} />
                            <Tool $w={18}>
                                <PhoneticText><PhoneticTop>wén</PhoneticTop><PhoneticBottom>文</PhoneticBottom></PhoneticText>
                            </Tool>
                            <Tool $w={28}><Chev /></Tool>
                        </ToolRow>
                    </GroupBody>
                    <GroupFooter>
                        <FooterLabel>字体</FooterLabel>
                        <LauncherSlot><Launcher /></LauncherSlot>
                    </GroupFooter>
                </Group>
                <GroupDivider />

                <Group $w={238}>
                    <GroupBody $pt={10} $pl={10}>
                        <RowsColumn>
                            <ToolRow $mt={4}>
                                <Tool $w={28}><LinesIcon lines={[[1, 17], [1, 17], [1, 17]]} /></Tool>
                                <ActiveTool $w={28}><LinesIcon lines={[[1, 17], [1, 17], [1, 17]]} /></ActiveTool>
                                <Tool $w={28}><LinesIcon lines={[[1, 17], [1, 17], [1, 17]]} y={4} /></Tool>
                                <Tool $w={30} $ml={2}><OrientIcon /></Tool>
                                <Tool $w={8}><Chev /></Tool>
                            </ToolRow>
                            <ToolRow $mt={11}>
                                <Tool $w={28}><LinesIcon lines={[[2, 16], [2, 12], [2, 16], [2, 12]]} /></Tool>
                                <ActiveTool $w={28}><LinesIcon lines={[[2, 16], [5, 13], [2, 16], [5, 13]]} /></ActiveTool>
                                <Tool $w={28}><LinesIcon lines={[[2, 16], [6, 16], [2, 16], [6, 16]]} /></Tool>
                                <Tool $w={30} $ml={2}><IndentIcon flip /></Tool>
                                <Tool $w={30}><IndentIcon /></Tool>
                            </ToolRow>
                        </RowsColumn>
                        <TallDivider />
                        <RowsColumn>
                            <ToolRow $mt={4}>
                                <Tool $w={34}><WrapIcon>{'ab\nc↵'}</WrapIcon></Tool>
                            </ToolRow>
                            <ToolRow $mt={11}>
                                <Tool $w={34}><MergeIcon /></Tool>
                                <Tool $w={24}><Chev /></Tool>
                            </ToolRow>
                        </RowsColumn>
                    </GroupBody>
                    <GroupFooter>
                        <FooterLabel>对齐方式</FooterLabel>
                        <LauncherSlot><Launcher /></LauncherSlot>
                    </GroupFooter>
                </Group>
                <GroupDivider />

                <Group $w={125}>
                    <GroupBody $col $pt={3} $pl={9}>
                        <ToolRow><ComboBox $w={107}>常规<Caret /></ComboBox></ToolRow>
                        <ToolRow>
                            <Tool $w={28}><MoneyIcon /></Tool>
                            <Tool $w={16}><Chev /></Tool>
                            <Tool $w={38}><PercentText>%</PercentText></Tool>
                            <Tool $w={22}><CommaText>,</CommaText></Tool>
                        </ToolRow>
                        <ToolRow>
                            <Tool $w={28}><DecimalWrap><span><DecimalArrow>←</DecimalArrow>.0</span><span>.00</span></DecimalWrap></Tool>
                            <Tool $w={30}><DecimalWrap><span>.00</span><span><DecimalArrow>→</DecimalArrow>.0</span></DecimalWrap></Tool>
                        </ToolRow>
                    </GroupBody>
                    <GroupFooter>
                        <FooterLabel>数字</FooterLabel>
                        <LauncherSlot><Launcher /></LauncherSlot>
                    </GroupFooter>
                </Group>
                <GroupDivider />

                <Group $w={160}>
                    <GroupBody $col $pl={14}>
                        <ToolRow><Tool $w={24}><CondFormatIcon /></Tool><StyleLabel>条件格式</StyleLabel><Chev /></ToolRow>
                        <ToolRow><Tool $w={24}><TableBrushIcon /></Tool><StyleLabel>套用表格格式</StyleLabel><Chev /></ToolRow>
                        <ToolRow><Tool $w={24}><TableBrushIcon fill /></Tool><StyleLabel>单元格样式</StyleLabel><Chev /></ToolRow>
                    </GroupBody>
                    <GroupFooter><FooterLabel>样式</FooterLabel></GroupFooter>
                </Group>
                <GroupDivider />

                <Group $w={115}>
                    <GroupBody $col $pl={14}>
                        <ToolRow><Tool $w={24}><CellIcon kind="insert" /></Tool><StyleLabel $mr={18}>插入</StyleLabel><Chev /></ToolRow>
                        <ToolRow><Tool $w={24}><CellIcon kind="delete" /></Tool><StyleLabel $mr={18}>删除</StyleLabel><Chev /></ToolRow>
                        <ToolRow><Tool $w={24}><CellIcon kind="format" /></Tool><StyleLabel $mr={4}>格式</StyleLabel><Chev /></ToolRow>
                    </GroupBody>
                    <GroupFooter><FooterLabel>单元格</FooterLabel></GroupFooter>
                </Group>
                <GroupDivider />

                <Group $w={123}>
                    <GroupBody $col $pl={15}>
                        <ToolRow>
                            <Tool $w={20}><SumIcon /></Tool>
                            <Tool $w={36}><Chev /></Tool>
                            <Tool $w={22}><SortIcon /></Tool>
                            <Tool $w={20}><Chev /></Tool>
                        </ToolRow>
                        <ToolRow>
                            <Tool $w={20}><FillDownIcon /></Tool>
                            <Tool $w={18}><Chev /></Tool>
                            <Tool $w={22} $ml={18}><FindIcon /></Tool>
                            <Tool $w={20}><Chev /></Tool>
                        </ToolRow>
                        <ToolRow>
                            <Tool $w={20}><EraserIcon /></Tool>
                            <Tool $w={18}><Chev /></Tool>
                        </ToolRow>
                    </GroupBody>
                    <GroupFooter><FooterLabel>编辑</FooterLabel></GroupFooter>
                </Group>
                <GroupDivider />

                <Group $w={71}>
                    <GroupBody $col $center $pt={18}>
                        <AddinDot />
                        <BigLabel $mt={14}>加</BigLabel>
                        <BigLabel>载项</BigLabel>
                    </GroupBody>
                    <GroupFooter><FooterLabel>加载项</FooterLabel></GroupFooter>
                </Group>
                <GroupDivider />

                <Group $w={123}>
                    <GroupBody $col $center $pt={14}>
                        <IconNudge $x={10}><PdfIcon /></IconNudge>
                        <BigLabel $latin $mt={5}>Create PDF</BigLabel>
                        <BigLabel $latin>and share link</BigLabel>
                    </GroupBody>
                    <GroupFooter $latin><FooterLabel>Adobe Acrobat</FooterLabel></GroupFooter>
                </Group>
                <GroupDivider />
                <RibbonRest><Collapse /></RibbonRest>
            </Ribbon>

            <FormulaBand>
                <NameBox>AQ10<Caret /></NameBox>
                <BarGrip><GripDots /></BarGrip>
                <FxBox>
                    <CrossGray />
                    <CheckGray />
                    <FxText>fx</FxText>
                </FxBox>
                <FormulaInput><Chev color="#666" /></FormulaInput>
            </FormulaBand>

            <SheetArea>
                <SheetGrid>
                    <Corner><SelectAll /></Corner>
                    {letters.map((l, i) => <ColHead key={i}><ColLetter>{l}</ColLetter></ColHead>)}

                    <RowHead>1</RowHead>
                    <Blank $span={35} />

                    <RowHead>2</RowHead>
                    <Blank $span={8} />
                    <SheetTitle>学生考勤表</SheetTitle>

                    <RowHead>3</RowHead>
                    <Blank $span={35} />

                    <RowHead>4</RowHead>
                    <InfoLabel $col={3} $span={4} $pl={3}>学院名称:</InfoLabel>
                    <InfoLabel $col={8} $span={4} $pl={17}>专业名称:</InfoLabel>
                    <InfoLabel $col={15} $span={4} $pl={8}>年级:</InfoLabel>
                    <InfoLabel $col={21} $span={4} $pl={5}>班级:</InfoLabel>
                    <InfoLabel $col={31} $span={3} $pl={30}>考勤符号:</InfoLabel>
                    <InfoLabel $col={34} $span={3} $pl={10}>出勤<CheckGlyph>√</CheckGlyph></InfoLabel>

                    <RowHead>5</RowHead>
                    <Blank />
                    <HeadName>学生姓名</HeadName>
                    {weeks.map(w => <WeekCell key={w}>{w}</WeekCell>)}
                    <WeekCell $span={1} $tail />

                    <RowHead>6</RowHead>
                    <Blank />
                    {weeks.map(w => [
                        <TurnCell key={`${w}a`}>①</TurnCell>,
                        <TurnCell key={`${w}b`}>②</TurnCell>,
                    ])}
                    <TurnCell $tail />

                    {students.map((marks, i) => [
                        <RowHead key={`h${i}`} $selected={i === 3}>{i + 7}</RowHead>,
                        <Blank key={`a${i}`} $lined />,
                        <NameCell key={`n${i}`}>白今今{i + 1}</NameCell>,
                        ...marks.split('').map((m, j) => (
                            <MarkCell key={`m${i}-${j}`} $fs={MARKS[m].size}>{MARKS[m].glyph}</MarkCell>
                        )),
                        <MarkCell key={`t${i}`} $fs={16} />,
                    ])}

                    <RowHead>23</RowHead>
                    <Blank $lined />
                    <NameCell />
                    {Array.from({ length: 33 }, (_, i) => <MarkCell key={i} $fs={16} />)}
                </SheetGrid>
                <Gutter>
                    <ScrollButton><Tri dir="up" /></ScrollButton>
                    <VerticalTrack><VerticalThumb /></VerticalTrack>
                    <ScrollButton><Tri dir="down" /></ScrollButton>
                </Gutter>
            </SheetArea>

            <TabStrip>
                <TabArrows>
                    <Tri dir="left" color="#c4c4c4" />
                    <Tri dir="right" color="#c4c4c4" />
                </TabArrows>
                <SheetTab>Sheet1</SheetTab>
                <AddSheet><PlusCircle /></AddSheet>
                <SplitGrip><GripDots color="#bdbdbd" /></SplitGrip>
                <HorizontalBar>
                    <HScrollButton><Tri dir="left" /></HScrollButton>
                    <HorizontalThumb />
                    <HorizontalFill />
                    <HScrollButton><Tri dir="right" /></HScrollButton>
                </HorizontalBar>
            </TabStrip>

            <StatusBar>
                <StatusText>就绪</StatusText>
                <Tool $w={24} $ml={15}><AccessIcon /></Tool>
                <AccessText>辅助功能: 调查</AccessText>
                <ViewSwitch>
                    <ViewButton $active><NormalViewIcon /></ViewButton>
                    <ViewButton><PageViewIcon /></ViewButton>
                    <ViewButton><BreakViewIcon /></ViewButton>
                </ViewSwitch>
                <ZoomArea>
                    <ZoomSign>−</ZoomSign>
                    <ZoomSlider><ZoomThumb /></ZoomSlider>
                    <ZoomSign>+</ZoomSign>
                    <ZoomValue>100%</ZoomValue>
                </ZoomArea>
            </StatusBar>
        </Window>
    )
}

export default App
